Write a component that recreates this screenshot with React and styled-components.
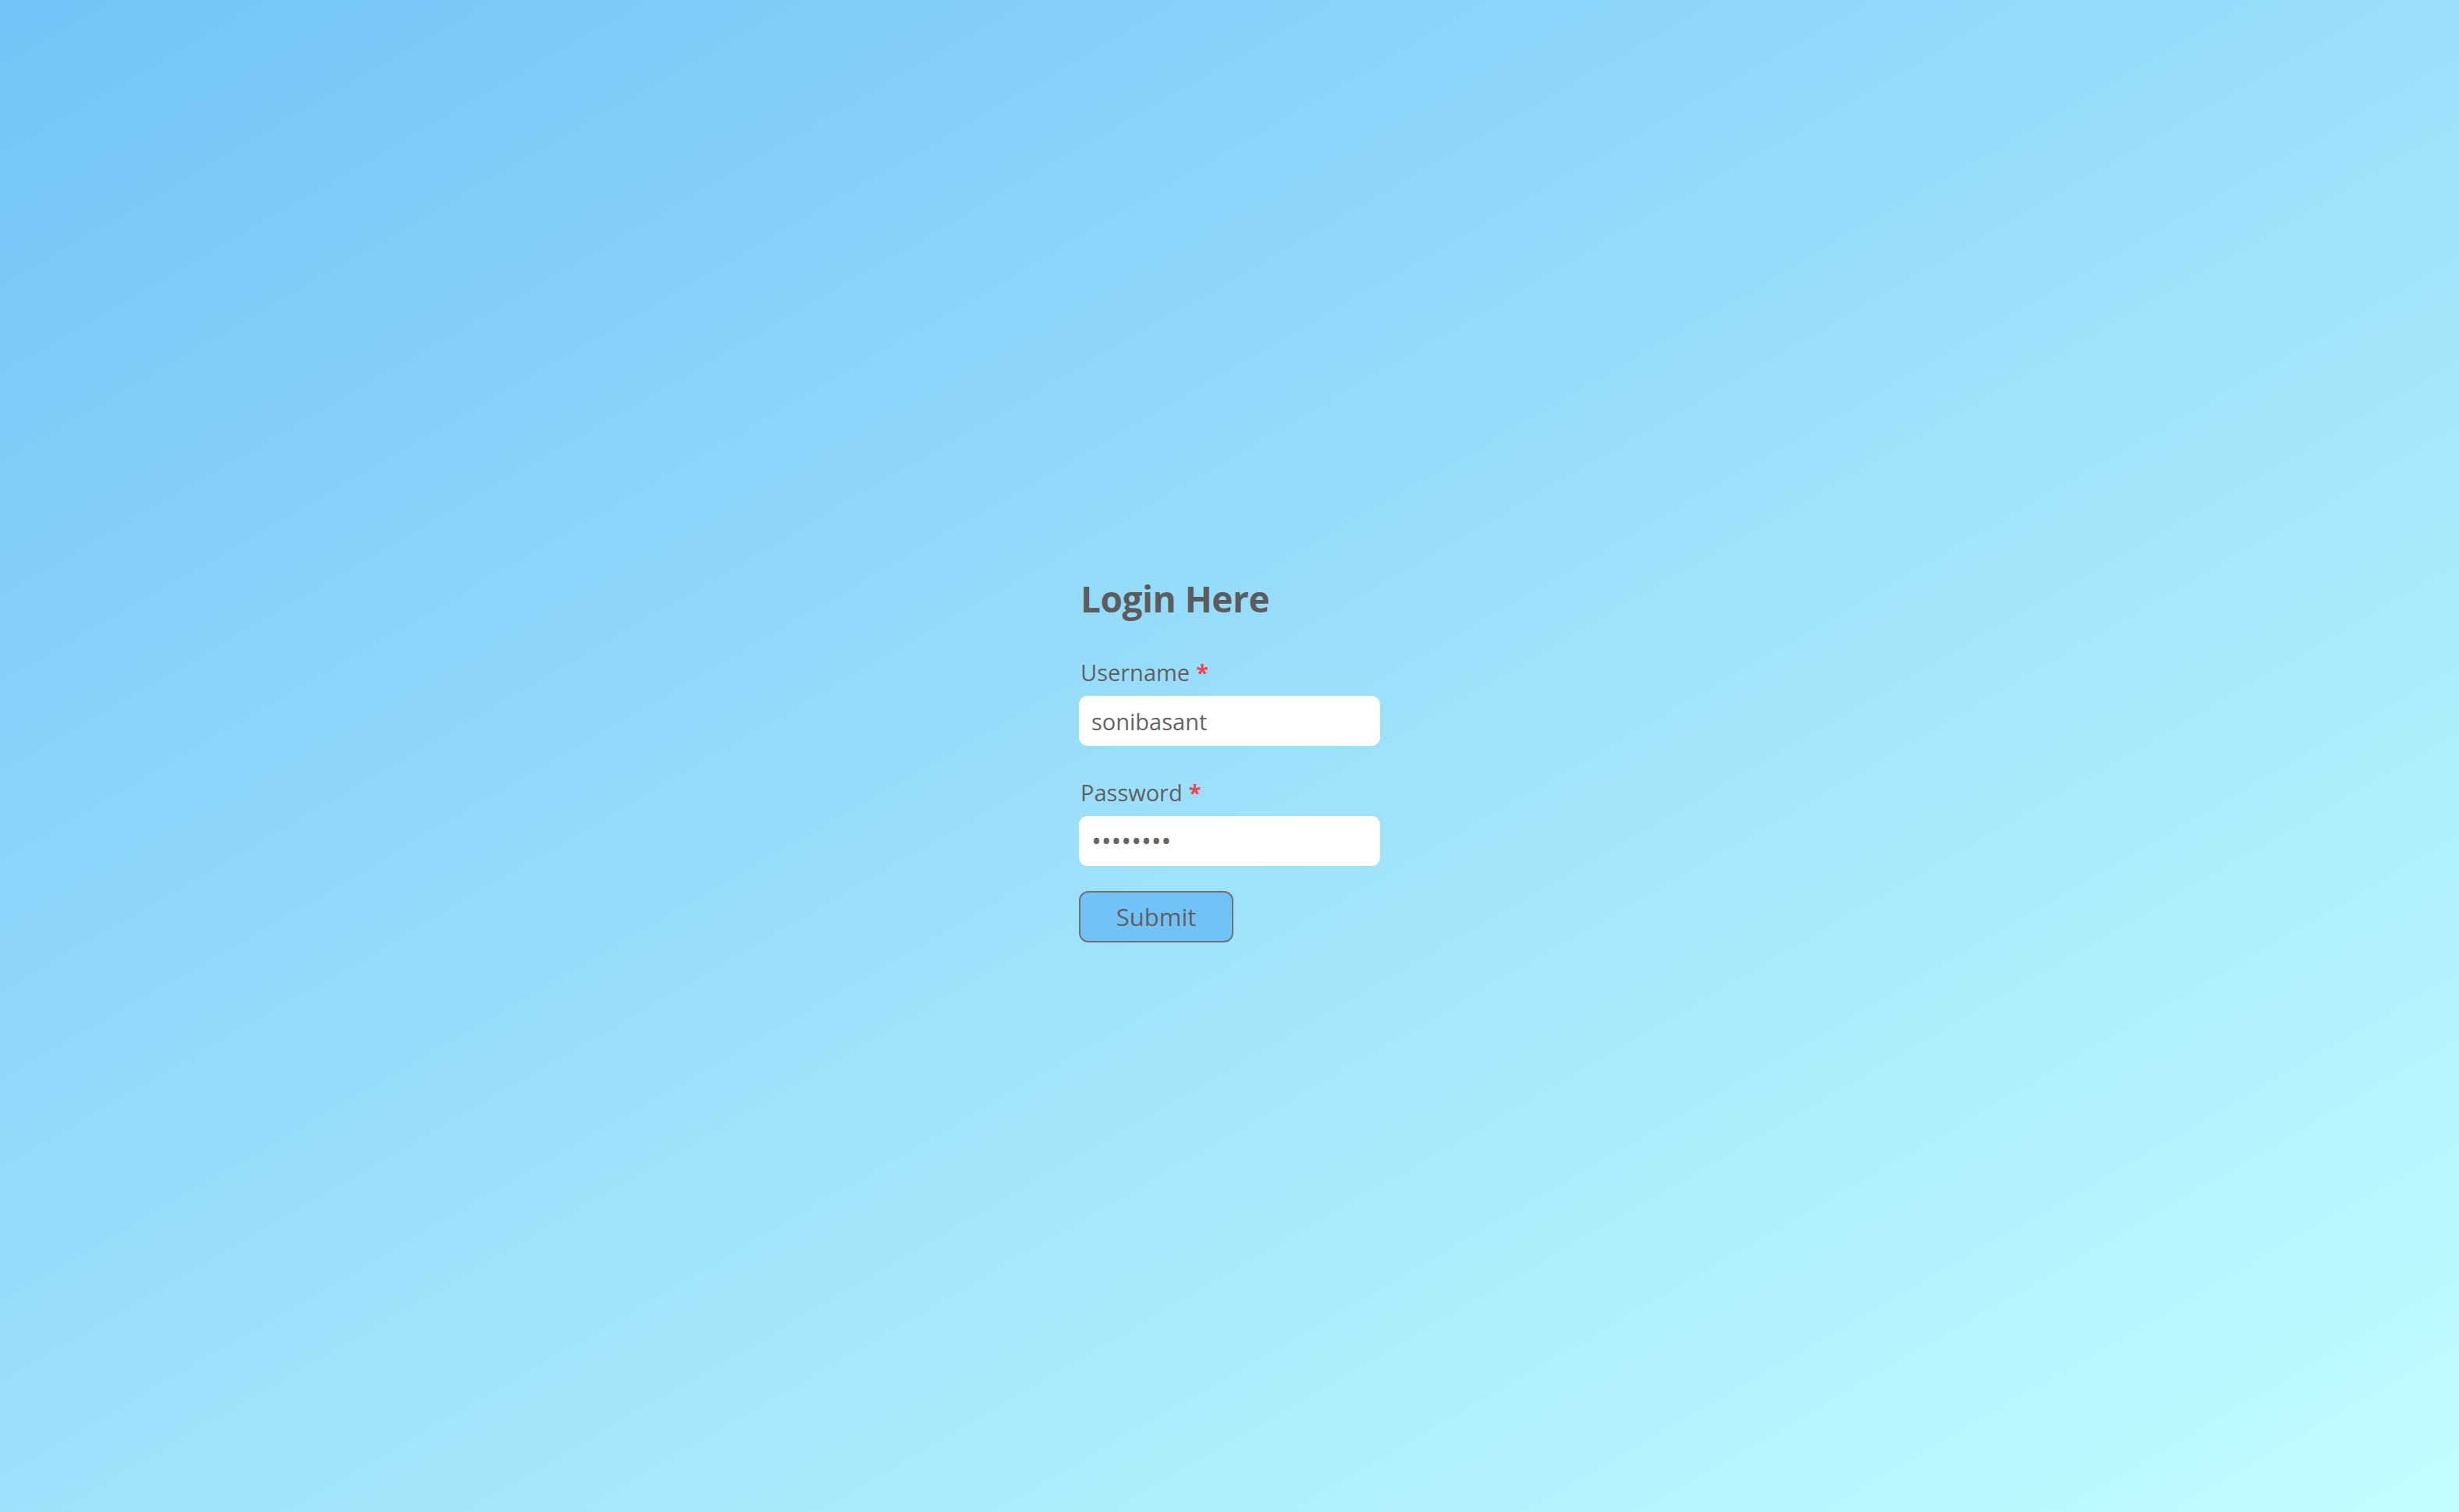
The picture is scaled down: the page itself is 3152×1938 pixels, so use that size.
import React, { useState } from "react";
import styled, { createGlobalStyle } from "styled-components";

const GlobalStyle = createGlobalStyle`
  html, body {
    margin: 0;
    padding: 0;
    height: 100%;
  }
  body {
    font-family: "Open Sans", "Noto Sans", sans-serif;
  }
  #root {
    height: 100%;
  }
`;

const Page = styled.div`
  display: flex;
  justify-content: center;
  align-items: center;
  width: 100%;
  min-height: 100vh;
  background: linear-gradient(150deg, #72c3f8 0%, #9fe3fb 55%, #c2fdff 100%);
`;

const Form = styled.form`
  display: flex;
  flex-direction: column;
  align-items: flex-start;
  width: 386px;
  padding-top: 8px;
  color: #5e5e5e;
`;

const Title = styled.h2`
  margin: 0 0 46px 2px;
  font-size: 46px;
  line-height: 58px;
  font-weight: 700;
  color: #5c5c5c;
  letter-spacing: -0.5px;
`;

const Field = styled.div`
  display: flex;
  flex-direction: column;
  width: 100%;
  gap: 10px;
  margin-bottom: ${(p) => p.$gap || "40px"};
`;

const Label = styled.label`
  font-size: 29px;
  line-height: 40px;
  padding-left: 2px;
  color: #606060;
`;

const Required = styled.span`
  color: #f2444e;
  font-weight: 700;
  margin-left: 8px;
`;

const Input = styled.input`
  box-sizing: border-box;
  width: 100%;
  height: 64px;
  padding: 0 16px;
  border: none;
  border-radius: 11px;
  background: #ffffff;
  font-family: inherit;
  font-size: ${(p) => (p.type === "password" ? "34px" : "29px")};
  color: #646464;
  outline: none;
`;

const SubmitButton = styled.button`
  box-sizing: border-box;
  width: 198px;
  height: 66px;
  border: 2px solid #727272;
  border-radius: 12px;
  background: #71c3f7;
  font-family: inherit;
  font-size: 31px;
  color: #5f5f5f;
  cursor: pointer;
`;

const App = () => {
  const [username, setUsername] = useState("sonibasant");
  const [password, setPassword] = useState("password");

  return (
    <>
      <GlobalStyle />
      <Page>
        <Form onSubmit={(e) => e.preventDefault()}>
          <Title>Login Here</Title>
          <Field>
            <Label htmlFor="username">
              Username<Required>*</Required>
            </Label>
            <Input
              id="username"
              type="text"
              value={username}
              onChange={(e) => setUsername(e.target.value)}
            />
          </Field>
          <Field $gap="32px">
            <Label htmlFor="password">
              Password<Required>*</Required>
            </Label>
            <Input
              id="password"
              type="password"
              value={password}
              onChange={(e) => setPassword(e.target.value)}
            />
          </Field>
          <SubmitButton type="submit">Submit</SubmitButton>
        </Form>
      </Page>
    </>
  );
};

export default App;
